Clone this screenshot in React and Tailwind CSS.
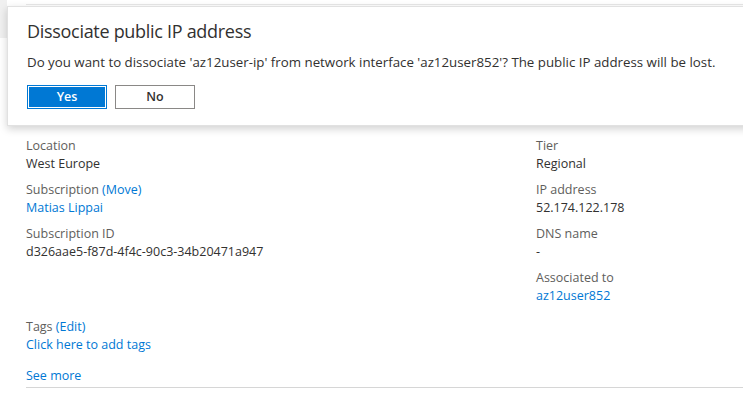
export default function App() {
  const font = { fontFamily: '"Open Sans", "Noto Sans", sans-serif' };
  return (
    <div className="relative w-[743px] h-[402px] overflow-hidden bg-white" style={font}>
      {/* Page behind */}
      <div className="absolute left-0 top-0 w-[7px] h-[38px] bg-[#f0f0f0]" />
      <div className="absolute left-[26px] right-0 top-[4px] h-px bg-[#e8e8e8]" />

      {/* Essentials */}
      <div className="pt-[137px] pl-[26px] text-[12.5px] leading-[18px]">
        <div className="flex">
          <div className="w-[510px] flex flex-col gap-[8px]">
            <div>
              <div className="text-[#605e5c]">Location</div>
              <div className="text-[#323130]">West Europe</div>
            </div>
            <div>
              <div className="text-[#605e5c]">
                Subscription <span className="text-[#0078d4]">(Move)</span>
              </div>
              <div className="text-[#0078d4]">Matias Lippai</div>
            </div>
            <div>
              <div className="text-[#605e5c]">Subscription ID</div>
              <div className="text-[#323130]">d326aae5-f87d-4f4c-90c3-34b20471a947</div>
            </div>
          </div>
          <div className="flex flex-col gap-[8px]">
            <div>
              <div className="text-[#605e5c]">Tier</div>
              <div className="text-[#323130]">Regional</div>
            </div>
            <div>
              <div className="text-[#605e5c]">IP address</div>
              <div className="text-[#323130]">52.174.122.178</div>
            </div>
            <div>
              <div className="text-[#605e5c]">DNS name</div>
              <div className="text-[#323130]">-</div>
            </div>
            <div>
              <div className="text-[#605e5c]">Associated to</div>
              <div className="text-[#0078d4]">az12user852</div>
            </div>
          </div>
        </div>
        <div className="mt-[13px]">
          <div className="text-[#605e5c]">
            Tags <span className="text-[#0078d4]">(Edit)</span>
          </div>
          <div className="text-[#0078d4]">Click here to add tags</div>
        </div>
        <div className="mt-[13px] text-[#0078d4]">See more</div>
        <div className="mt-[2px] h-px bg-[#d6d6d6]" />
      </div>

      {/* Dialog */}
      <div className="absolute left-[7px] top-[6px] w-[760px] h-[120px] bg-white border border-[#e1e1e1] shadow-[0_3px_8px_rgba(0,0,0,0.18)] pl-[19px] pt-[11px]">
        <h2 className="text-[18px] leading-[26px] text-[#323130] tracking-[-0.3px]">
          Dissociate public IP address
        </h2>
        <p className="mt-[9px] text-[13.3px] leading-[18px] text-[#323130]">
          Do you want to dissociate 'az12user-ip' from network interface 'az12user852'? The public IP address will be lost.
        </p>
        <div className="mt-[14px] flex gap-[8px]">
          <button className="w-[80px] h-[24px] bg-[#0078d4] border border-[#0078d4] outline outline-1 outline-white -outline-offset-2 text-white text-[12.5px] font-semibold">
            Yes
          </button>
          <button className="w-[80px] h-[24px] bg-white border border-[#8a8886] text-[#323130] text-[12.5px] font-semibold">
            No
          </button>
        </div>
      </div>
    </div>
  );
}
